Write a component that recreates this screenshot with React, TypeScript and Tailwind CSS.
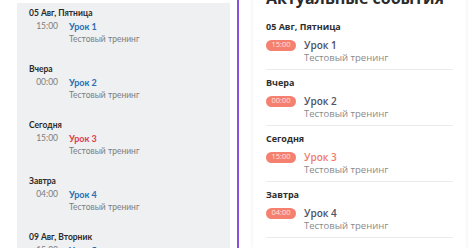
const events = [
  { day: "05 Авг, Пятница", time: "15:00", title: "Урок 1" },
  { day: "Вчера", time: "00:00", title: "Урок 2" },
  { day: "Сегодня", time: "15:00", title: "Урок 3", today: true },
  { day: "Завтра", time: "04:00", title: "Урок 4" },
  { day: "09 Авг, Вторник", time: "15:00", title: "Урок 5" },
];

function Sidebar() {
  return (
    <div className="mt-[3px] ml-[17px] w-[213px] shrink-0 bg-[#eef0f2] pl-[12px] pt-[3px] font-['Lato',sans-serif]">
      {events.map((e) => (
        <div key={e.title} className="pb-[16px]">
          <div className="h-[14px] text-[8.5px] font-bold leading-[14px] text-[#2a2a2a]">{e.day}</div>
          <div className="flex gap-[11px]">
            <div className="w-[29px] text-right text-[8.5px] leading-[13px] text-[#7d7d7d]">{e.time}</div>
            <div>
              <div className={`text-[9px] font-bold leading-[13px] ${e.today ? "text-[#e03c4b]" : "text-[#2b6cb3]"}`}>
                {e.title}
              </div>
              <div className="text-[8.5px] leading-[13px] text-[#7d7d7d]">Тестовый тренинг</div>
            </div>
          </div>
        </div>
      ))}
    </div>
  );
}

function EventsCard() {
  return (
    <div className="mt-[-25px] w-[213px] shrink-0 bg-white px-[13px] pt-[12px] shadow-[0_0_4px_rgba(0,0,0,0.08)] font-['Open_Sans',sans-serif]">
      <div className="whitespace-nowrap text-[16px] font-bold leading-[22px] text-[#2b2b2b]">Актуальные события</div>
      <div className="pt-[11px]">
        {events.map((e, i) => (
          <div key={e.title} className={i > 0 ? "border-t border-[#ececec] pt-[6px]" : ""}>
            <div className="h-[14px] text-[9px] font-bold leading-[14px] text-[#2e2e2e]">{e.day}</div>
            <div className="mt-[4px] flex items-center gap-[8px]">
              <span className="flex h-[11px] w-[30px] items-center justify-center rounded-full bg-[#f5806f] text-[7.5px] leading-none text-[#fde4df]">
                {e.time}
              </span>
              <span className={`text-[10px] font-semibold leading-[14px] ${e.today ? "text-[#f07b6b]" : "text-[#4d5068]"}`}>
                {e.title}
              </span>
            </div>
            <div className="pl-[38px] pb-[5px] text-[9.5px] leading-[12px] text-[#8a8a8a]">Тестовый тренинг</div>
          </div>
        ))}
      </div>
    </div>
  );
}

export default function App() {
  return (
    <div className="flex h-[248px] w-[474px] overflow-hidden bg-white">
      <Sidebar />
      <div className="ml-[7px] flex border-l-2 border-[#8a4fdc] pl-[14px]">
        <EventsCard />
      </div>
    </div>
  );
}
